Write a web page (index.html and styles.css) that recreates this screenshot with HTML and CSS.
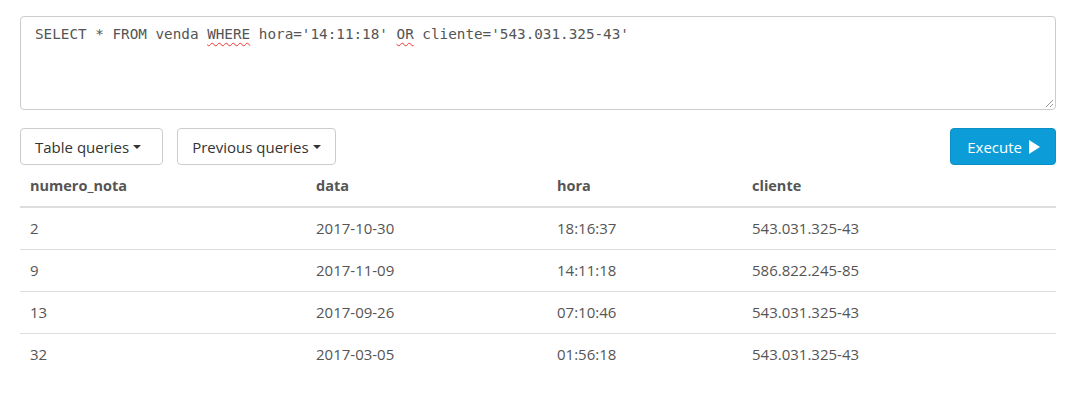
FILE: index.html
```html
<!DOCTYPE html>
<html>
<head>
<meta charset="utf-8">
<link rel="stylesheet" href="styles.css">
</head>
<body>
<div class="page">
  <div class="editor">
    <div class="code">SELECT * FROM venda <span class="spell">WHERE</span> hora='14:11:18' <span class="spell">OR</span> cliente='543.031.325-43'</div>
    <svg class="grip" width="10" height="10" viewBox="0 0 10 10"><path d="M9 2 L2 9 M9 6 L6 9" stroke="#999" stroke-width="1" fill="none"/></svg>
  </div>
  <div class="toolbar">
    <div class="group">
      <button class="btn btn-wide">Table queries <span class="caret"></span></button>
      <button class="btn">Previous queries <span class="caret"></span></button>
    </div>
    <button class="btn btn-primary">Execute <svg class="play" width="12" height="14" viewBox="0 0 12 14"><path d="M1 0 L12 7 L1 14 Z" fill="#fff"/></svg></button>
  </div>
  <table class="results">
    <thead>
      <tr><th class="c1">numero_nota</th><th class="c2">data</th><th class="c3">hora</th><th class="c4">cliente</th></tr>
    </thead>
    <tbody>
      <tr><td>2</td><td>2017-10-30</td><td>18:16:37</td><td>543.031.325-43</td></tr>
      <tr><td>9</td><td>2017-11-09</td><td>14:11:18</td><td>586.822.245-85</td></tr>
      <tr><td>13</td><td>2017-09-26</td><td>07:10:46</td><td>543.031.325-43</td></tr>
      <tr><td>32</td><td>2017-03-05</td><td>01:56:18</td><td>543.031.325-43</td></tr>
    </tbody>
  </table>
</div>
</body>
</html>
```

FILE: styles.css
```css
html, body {
  margin: 0;
  padding: 0;
  background: #fff;
}
body {
  font-family: "Open Sans", "Noto Sans", sans-serif;
  font-size: 15px;
  color: #555;
}
.page {
  padding: 16px 12px 0 20px;
}
.editor {
  position: relative;
  height: 94px;
  border: 1px solid #ccc;
  border-radius: 4px;
  box-sizing: border-box;
  padding: 7px 14px;
}
.code {
  font-family: "DejaVu Sans Mono", "Liberation Mono", monospace;
  font-size: 14.3px;
  line-height: 20px;
  color: #555;
  white-space: pre;
}
.spell {
  text-decoration: underline wavy #e33;
  text-decoration-thickness: 1px;
  text-underline-offset: 3px;
}
.grip {
  position: absolute;
  right: 1px;
  bottom: 1px;
}
.toolbar {
  display: flex;
  justify-content: space-between;
  align-items: center;
  margin-top: 18px;
}
.group {
  display: flex;
  gap: 14px;
}
.btn {
  font-family: inherit;
  font-size: 15px;
  color: #333;
  background: #fff;
  border: 1px solid #ccc;
  border-radius: 4px;
  height: 37px;
  padding: 0 14px;
  display: flex;
  align-items: center;
  gap: 4px;
}
.btn-wide {
  padding-right: 21px;
}
.caret {
  display: inline-block;
  width: 0;
  height: 0;
  border-left: 4px solid transparent;
  border-right: 4px solid transparent;
  border-top: 4px solid #333;
}
.btn-primary {
  background: #0c9dd9;
  border-color: #0b8fc6;
  color: #fff;
  padding: 0 15px 0 16px;
  gap: 6px;
}
.results {
  width: 100%;
  border-collapse: collapse;
  table-layout: fixed;
}
.results th, .results td {
  text-align: left;
  padding: 10px 10px;
  line-height: 21px;
  vertical-align: middle;
}
.results th {
  font-weight: 700;
  font-size: 14.5px;
  border-bottom: 2px solid #ddd;
}
.results td {
  border-top: 1px solid #ddd;
}
.results tbody tr:first-child td {
  border-top: none;
}
.c1 { width: 266px; }
.c2 { width: 221px; }
.c3 { width: 175px; }
```
